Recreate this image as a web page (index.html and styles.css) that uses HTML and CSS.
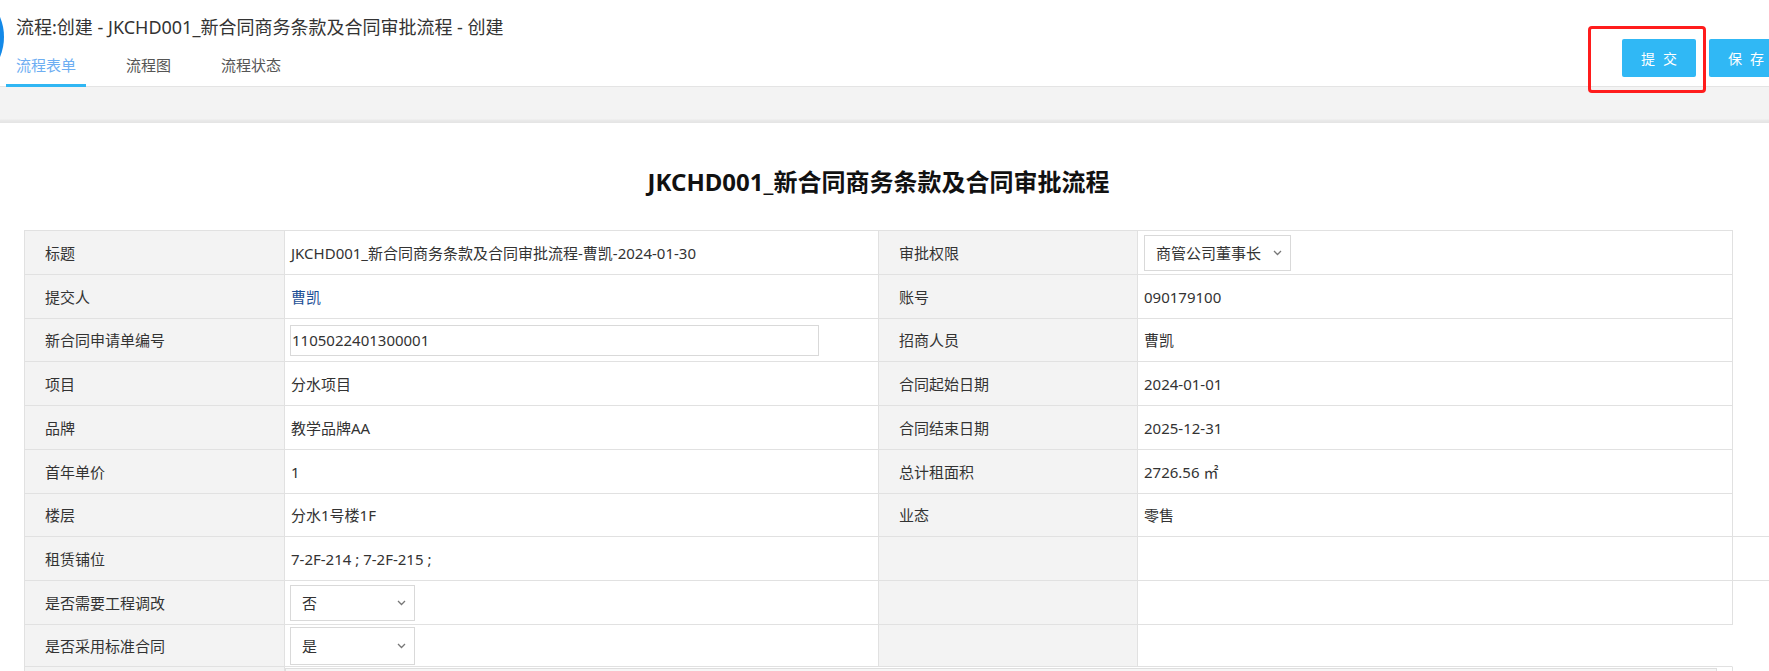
FILE: index.html
```html
<!DOCTYPE html>
<html lang="zh-CN">
<head>
<meta charset="utf-8">
<title>流程:创建</title>
<link rel="stylesheet" href="styles.css">
</head>
<body>
<header class="topbar">
  <div class="logo-dot"></div>
  <div class="head-left">
    <h1 class="page-title">流程:创建 - JKCHD001_新合同商务条款及合同审批流程 - 创建</h1>
    <nav class="tabs">
      <span class="tab active">流程表单</span>
      <span class="tab">流程图</span>
      <span class="tab">流程状态</span>
    </nav>
  </div>
  <div class="actions">
    <button class="btn">提交</button>
    <button class="btn">保存</button>
    <span class="highlight"></span>
  </div>
</header>
<div class="band"></div>
<main class="content">
  <h2 class="form-title">JKCHD001_新合同商务条款及合同审批流程</h2>
  <div class="form-table">
    <div class="row">
      <div class="cell label">标题</div>
      <div class="cell">JKCHD001_新合同商务条款及合同审批流程-曹凯-2024-01-30</div>
      <div class="cell label">审批权限</div>
      <div class="cell">
        <div class="select select-wide"><span>商管公司董事长</span><svg class="chev" width="9" height="6" viewBox="0 0 9 6"><polyline points="1,1 4.5,4.5 8,1" fill="none" stroke="#777" stroke-width="1.3"/></svg></div>
      </div>
    </div>
    <div class="row">
      <div class="cell label">提交人</div>
      <div class="cell link">曹凯</div>
      <div class="cell label">账号</div>
      <div class="cell">090179100</div>
    </div>
    <div class="row h43">
      <div class="cell label">新合同申请单编号</div>
      <div class="cell"><div class="text-input">1105022401300001</div></div>
      <div class="cell label">招商人员</div>
      <div class="cell">曹凯</div>
    </div>
    <div class="row">
      <div class="cell label">项目</div>
      <div class="cell">分水项目</div>
      <div class="cell label">合同起始日期</div>
      <div class="cell">2024-01-01</div>
    </div>
    <div class="row">
      <div class="cell label">品牌</div>
      <div class="cell">教学品牌AA</div>
      <div class="cell label">合同结束日期</div>
      <div class="cell">2025-12-31</div>
    </div>
    <div class="row">
      <div class="cell label">首年单价</div>
      <div class="cell">1</div>
      <div class="cell label">总计租面积</div>
      <div class="cell">2726.56 ㎡</div>
    </div>
    <div class="row h43">
      <div class="cell label">楼层</div>
      <div class="cell">分水1号楼1F</div>
      <div class="cell label">业态</div>
      <div class="cell">零售</div>
    </div>
    <div class="row row-extra">
      <div class="cell label">租赁铺位</div>
      <div class="cell">7-2F-214 ; 7-2F-215 ;</div>
      <div class="cell label"></div>
      <div class="cell"></div>
      <div class="cell extra"></div>
    </div>
    <div class="row">
      <div class="cell label">是否需要工程调改</div>
      <div class="cell">
        <div class="select select-small"><span>否</span><svg class="chev" width="9" height="6" viewBox="0 0 9 6"><polyline points="1,1 4.5,4.5 8,1" fill="none" stroke="#777" stroke-width="1.3"/></svg></div>
      </div>
      <div class="cell label"></div>
      <div class="cell"></div>
    </div>
    <div class="row h42">
      <div class="cell label">是否采用标准合同</div>
      <div class="cell">
        <div class="select select-small tall"><span>是</span><svg class="chev" width="9" height="6" viewBox="0 0 9 6"><polyline points="1,1 4.5,4.5 8,1" fill="none" stroke="#777" stroke-width="1.3"/></svg></div>
      </div>
      <div class="cell label"></div>
      <div class="cell open"></div>
    </div>
    <div class="row">
      <div class="cell label"></div>
      <div class="cell span3"><div class="memo"></div></div>
    </div>
  </div>
</main>
</body>
</html>
```

FILE: styles.css
```css
* { box-sizing: border-box; }
html, body { margin: 0; padding: 0; }
body {
  width: 1769px;
  height: 671px;
  overflow: hidden;
  background: #fff;
  color: #333;
  font-family: "Noto Sans", "Noto Sans CJK SC", sans-serif;
}

.topbar {
  position: relative;
  display: flex;
  height: 87px;
  background: #fff;
  border-bottom: 1px solid #e4e4e4;
}
.logo-dot {
  position: absolute;
  left: -100px;
  top: -15px;
  width: 104px;
  height: 104px;
  border-radius: 50%;
  background: #1389e8;
}
.head-left {
  flex: 1;
  padding: 15px 0 0 16px;
}
.page-title {
  margin: 0;
  font-size: 18px;
  line-height: 24px;
  font-weight: 400;
  color: #333;
}
.tabs {
  display: flex;
  gap: 30px;
  margin: 16px 0 0 -10px;
}
.tab {
  padding: 0 10px 9px;
  font-size: 15px;
  line-height: 20px;
  color: #555;
  border-bottom: 3px solid transparent;
}
.tab.active {
  color: #6eaef2;
  border-bottom-color: #30b6f3;
}
.actions {
  position: relative;
  display: flex;
  align-items: flex-start;
  gap: 13px;
  padding-top: 39px;
  margin-right: -14px;
}
.btn {
  width: 74px;
  height: 38px;
  border: 0;
  border-radius: 2px;
  background: #30b8f5;
  color: #fff;
  font-family: inherit;
  font-size: 14px;
  letter-spacing: 8px;
  padding: 0 0 0 8px;
}
.highlight {
  position: absolute;
  left: -34px;
  top: 26px;
  width: 118px;
  height: 67px;
  border: 3px solid #ff1c1c;
  border-radius: 4px;
}

.band {
  height: 36px;
  background: linear-gradient(#f3f3f3 0, #f3f3f3 32px, #eaeaea 33px, #e4e4e4 36px);
}

.content {
  padding: 43px 0 0 24px;
}
.form-title {
  width: 1709px;
  margin: 0 0 32px;
  text-align: center;
  font-size: 24px;
  line-height: 32px;
  font-weight: 700;
  color: #111;
}
.form-table {
  width: 1709px;
  border-top: 1px solid #e1e1e1;
  border-left: 1px solid #e1e1e1;
}
.row {
  display: grid;
  grid-template-columns: 260px 594px 259px 595px;
  height: 44px;
}
.row.h43 { height: 43px; }
.row.h42 { height: 42px; }
.row.row-extra {
  grid-template-columns: 260px 594px 259px 595px 100px;
}
.cell {
  display: flex;
  align-items: center;
  padding-left: 6px;
  font-size: 15px;
  line-height: 20px;
  color: #333;
  white-space: nowrap;
  border-right: 1px solid #e1e1e1;
  border-bottom: 1px solid #e1e1e1;
}
.cell.label {
  background: #f3f3f3;
  padding-left: 20px;
}
.cell.link { color: #1d4f96; }
.cell.extra {
  border-right: 0;
  box-shadow: 0 -1px 0 #e1e1e1;
}
.cell.open { border-right-color: transparent; }
.cell.span3 {
  grid-column: span 3;
  align-items: flex-start;
  padding-left: 0;
}
.memo {
  width: 1432px;
  height: 30px;
  margin-top: 1px;
  background: #f6f6f6;
  border: 1px solid #dedede;
}

.text-input {
  display: flex;
  align-items: center;
  width: 529px;
  height: 31px;
  margin-left: -1px;
  padding-left: 1px;
  border: 1px solid #d9d9d9;
  font-size: 15px;
  color: #333;
}
.select {
  display: flex;
  align-items: center;
  justify-content: space-between;
  height: 36px;
  padding: 0 8px 0 11px;
  border: 1px solid #d9d9d9;
  background: #fff;
  font-size: 15px;
  color: #333;
}
.select.tall { height: 38px; }
.select-wide { width: 147px; }
.select-small { width: 125px; margin-left: -1px; }
.chev { display: block; }
```
